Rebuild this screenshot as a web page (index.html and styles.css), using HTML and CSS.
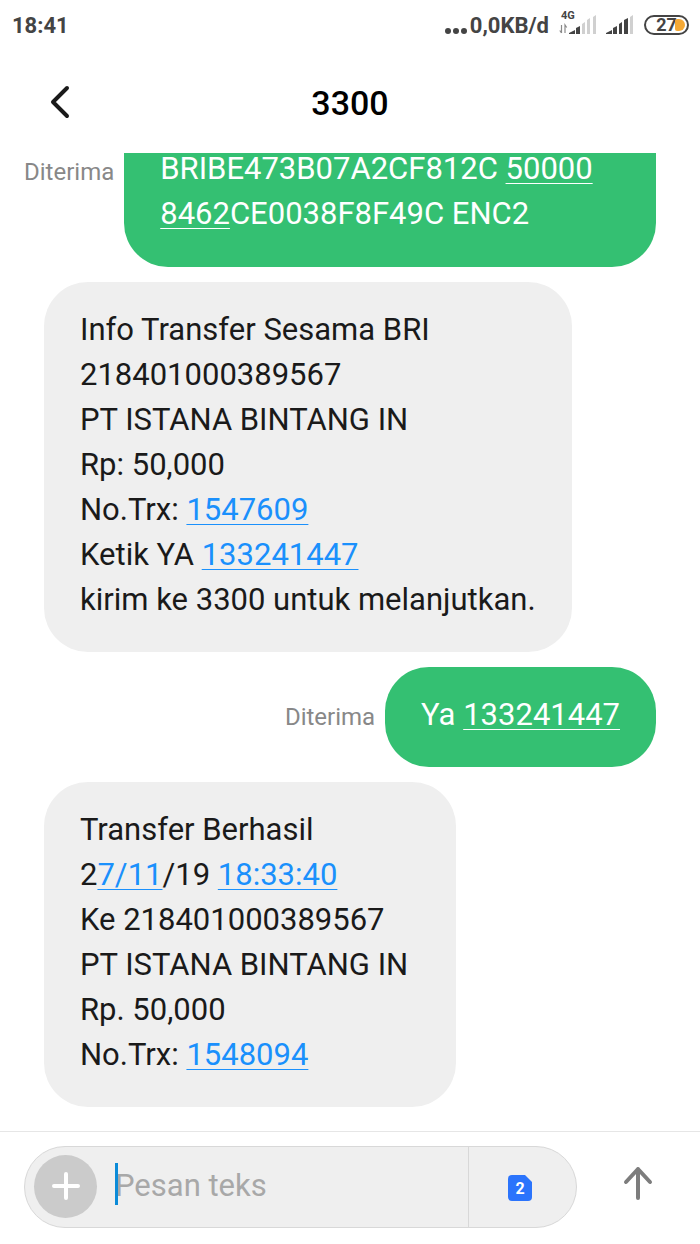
FILE: index.html
```html
<!DOCTYPE html>
<html lang="id">
<head>
<meta charset="utf-8">
<meta name="viewport" content="width=device-width, initial-scale=1">
<title>3300</title>
<link rel="stylesheet" href="styles.css">
</head>
<body>
<div class="app">
  <div class="status">
    <span class="status-time">18:41</span>
    <div class="status-right">
      <svg class="dots" width="24" height="24" viewBox="0 0 24 24" aria-hidden="true"><circle cx="4" cy="18" r="3"/><circle cx="12" cy="18" r="3"/><circle cx="20" cy="18" r="3"/></svg>
      <span class="status-speed">0,0KB/d</span>
      <div class="signal">
        <span class="net">4G</span>
        <svg width="38" height="24" viewBox="0 0 38 24" aria-hidden="true">
          <path d="M2.500 12v8M.8 17.500l1.700 2.500M6 20v-8l1.700 2.500" fill="none" stroke="#8a8a8a" stroke-width="1.200"/>
          <path d="M10 21v-1l6-3v4zM17 21v-6l4-2v8z" fill="#444"/>
          <path d="M23 21V11l3-2v12zM28 21V7l3-2v16zM34 21V4l3-2v19z" fill="#d0d0d0"/>
        </svg>
      </div>
      <svg width="28" height="24" viewBox="0 0 28 24" aria-hidden="true">
        <path d="M0 21v-1l6-3v4zM7 21v-6l4-2v8zM13 21V11l3-2v12zM18 21V7l4-2v16z" fill="#444"/>
        <path d="M24 21V4l3-2v19z" fill="#d0d0d0"/>
      </svg>
      <div class="battery">27<i class="charge"></i></div>
    </div>
  </div>

  <header class="header">
    <button class="back" type="button" aria-label="Kembali">
      <svg width="24" height="36" viewBox="0 0 24 36"><path d="M19 4 5 18l14 14" fill="none" stroke="#1a1a1a" stroke-width="4" stroke-linecap="round" stroke-linejoin="round"/></svg>
    </button>
    <h1 class="title">3300</h1>
  </header>

  <main class="thread">
    <div class="row sent">
      <span class="state">Diterima</span>
      <p class="bubble wide">BRIBE473B07A2CF812C <a href="#">50000</a><br><a href="#">8462</a>CE0038F8F49C ENC2</p>
    </div>
    <div class="row">
      <p class="bubble">Info Transfer Sesama BRI<br>218401000389567<br>PT ISTANA BINTANG IN<br>Rp: 50,000<br>No.Trx: <a href="#">1547609</a><br>Ketik YA <a href="#">133241447</a><br>kirim ke 3300 untuk melanjutkan.</p>
    </div>
    <div class="row sent">
      <span class="state">Diterima</span>
      <p class="bubble">Ya <a href="#">133241447</a></p>
    </div>
    <div class="row">
      <p class="bubble roomy">Transfer Berhasil<br>2<a href="#">7/11</a>/19 <a href="#">18:33:40</a><br>Ke 218401000389567<br>PT ISTANA BINTANG IN<br>Rp. 50,000<br>No.Trx: <a href="#">1548094</a></p>
    </div>
  </main>

  <form class="composer">
    <div class="pill">
      <button class="add" type="button" aria-label="Tambah lampiran">
        <svg width="28" height="28" viewBox="0 0 28 28"><path d="M14 2v24M2 14h24" stroke="#fff" stroke-width="4" stroke-linecap="round"/></svg>
      </button>
      <div class="field">
        <input class="input" type="text" placeholder="Pesan teks" aria-label="Pesan teks">
        <span class="caret"></span>
      </div>
      <button class="sim" type="button" aria-label="SIM 2">
        <svg class="sim-icon" width="24" height="26" viewBox="0 0 24 26"><path d="M4 0h13l7 7v15a4 4 0 0 1-4 4H4a4 4 0 0 1-4-4V4a4 4 0 0 1 4-4z" fill="#2b74fc"/><text class="sim-number" x="12" y="19" text-anchor="middle">2</text></svg>
      </button>
    </div>
    <button class="send" type="button" aria-label="Kirim">
      <svg width="32" height="36" viewBox="0 0 32 36"><path d="M16 33V4M4 17 16 4l12 13" fill="none" stroke="#7d7d7d" stroke-width="4" stroke-linecap="round" stroke-linejoin="round"/></svg>
    </button>
  </form>
</div>
</body>
</html>
```
FILE: styles.css
```css
* { box-sizing: border-box; }

body {
  margin: 0;
  background: #fff;
  color: #1a1a1a;
  font-family: Roboto, "Noto Sans", sans-serif;
}

button {
  display: flex;
  align-items: center;
  justify-content: center;
  padding: 0;
  border: 0;
  background: none;
}

.app {
  display: flex;
  flex-direction: column;
  height: 100vh;
}

.status {
  display: flex;
  align-items: center;
  justify-content: space-between;
  flex: none;
  height: 50px;
  padding: 0 11px 0 12px;
  color: #444;
  font-size: 22px;
  font-weight: 700;
}

.status-right {
  display: flex;
  align-items: center;
}

.dots { fill: #444; margin-right: 2px; }

.signal {
  position: relative;
  display: flex;
  margin: 0 9px 0 10px;
}

.net {
  position: absolute;
  left: 2px;
  top: -3px;
  font-size: 11px;
  line-height: 12px;
}

.battery {
  position: relative;
  width: 45px;
  height: 20px;
  margin-left: 10px;
  border: 2px solid #444;
  border-radius: 10px;
  font-size: 18px;
  line-height: 16px;
  text-align: center;
}

.charge {
  position: absolute;
  right: 2px;
  top: 2px;
  width: 10px;
  height: 12px;
  border-radius: 2px 6px 6px 2px;
  background: #f5a935;
}

.header {
  display: grid;
  grid-template-columns: 72px 1fr 72px;
  align-items: center;
  flex: none;
  height: 103px;
  padding: 0 24px;
}

.back { height: 48px; }

.title {
  margin: 0;
  padding-top: 2px;
  color: #000;
  font-size: 34px;
  font-weight: 500;
  text-align: center;
}

.thread {
  display: flex;
  flex: 1;
  flex-direction: column;
  justify-content: flex-end;
  gap: 15px;
  min-height: 0;
  padding: 0 44px 24px;
  overflow: hidden;
}

.row {
  display: flex;
  align-items: center;
  flex: none;
}

.sent {
  justify-content: flex-end;
  gap: 10px;
  margin-left: -20px;
}

.state {
  color: #888;
  font-size: 24px;
}

.bubble {
  margin: 0;
  padding: 25px 36px 30px;
  border-radius: 44px;
  background: #efefef;
  font-size: 31px;
  line-height: 45px;
}

.bubble a {
  color: #1a90fc;
  text-decoration-thickness: 1px;
  text-underline-offset: 4px;
}

.sent .bubble {
  background: #34c072;
  color: #fff;
}

.sent .bubble a { color: #fff; }

.wide {
  flex: 1;
  padding-top: 70px;
}

.sent .wide { padding-bottom: 31px; }

.roomy { padding-right: 48px; }

.composer {
  display: flex;
  align-items: center;
  flex: none;
  height: 113px;
  padding: 0 0 2px 24px;
  border-top: 1px solid #e6e6e6;
}

.pill {
  display: flex;
  flex: 1;
  align-items: center;
  height: 82px;
  padding-left: 9px;
  border: 1px solid #d8d8d8;
  border-radius: 41px;
  background: #efefef;
}

.add {
  flex: none;
  width: 63px;
  height: 63px;
  margin-bottom: 2px;
  border-radius: 50%;
  background: #cbcbcb;
}

.field {
  position: relative;
  flex: 1;
  min-width: 0;
  margin: 0 0 4px 18px;
}

.input {
  width: 100%;
  height: 44px;
  padding: 0;
  border: 0;
  outline: 0;
  background: none;
  color: #1a1a1a;
  font: inherit;
  font-size: 31px;
}

.input::placeholder { color: #a8a8a8; }

.caret {
  position: absolute;
  left: 0;
  top: 0;
  width: 3px;
  height: 42px;
  background: #0b8bd8;
}

.sim {
  flex: none;
  width: 108px;
  height: 100%;
  padding: 2px 6px 0 0;
  border-left: 1px solid #d8d8d8;
}

.sim-number {
  fill: #fff;
  font-family: Roboto, sans-serif;
  font-size: 16px;
  font-weight: 700;
}

.send {
  flex: none;
  width: 123px;
  height: 80px;
  padding: 0 2px 8px 0;
}
```
